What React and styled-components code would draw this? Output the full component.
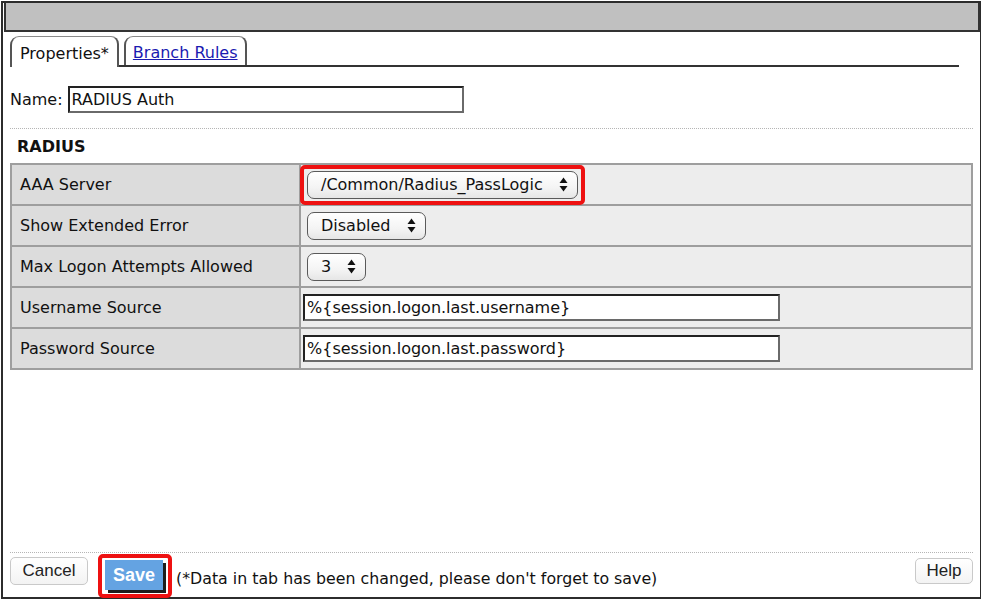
import React from "react";
import styled, { createGlobalStyle } from "styled-components";

const GlobalStyle = createGlobalStyle`
  html, body { margin: 0; padding: 0; background: #fff; }
  body { font-family: "DejaVu Sans", Verdana, sans-serif; font-size: 16px; color: #111; }
  * { box-sizing: border-box; }
`;

const Frame = styled.div`
  margin: 1px 0 0 1px;
  width: 980px;
  height: 598px;
  border: 2px solid #2c2c2c;
  border-right-width: 1px;
  display: flex;
  flex-direction: column;
`;

const TitleBar = styled.div`
  height: 29px;
  margin-left: 1px;
  background: #c0c0c0;
  border: 2px solid #333;
  border-top: none;
`;

const TabBar = styled.div`
  display: flex;
  align-items: flex-end;
  margin: 4px 21px 0 7px;
  height: 31px;
`;

const Tab = styled.div`
  height: ${(p) => (p.$active ? "31px" : "29px")};
  padding: 3px ${(p) => (p.$active ? "8px" : "7px")} 0;
  display: flex;
  align-items: center;
  background: #fff;
  border: 2px solid #555;
  border-top: 1px solid #8a8a8a;
  border-bottom: none;
  border-radius: 9px 8px 0 0;
  font-size: 16px;
  color: ${(p) => (p.$active ? "#111" : "#1a1ab0")};
  text-decoration: ${(p) => (p.$active ? "none" : "underline")};
  margin-left: ${(p) => (p.$active ? "0" : "3px")};
`;

const TabRest = styled.div`
  flex: 1;
  display: flex;
  align-items: flex-end;
  height: 31px;
  border-bottom: 2px solid #333;
  padding-left: 2px;
`;

const Content = styled.div`
  padding: 0 7px;
  display: flex;
  flex-direction: column;
  flex: 1;
`;

const NameRow = styled.div`
  display: flex;
  align-items: center;
  gap: 5px;
  margin-top: 19px;
`;

const TextInput = styled.div`
  width: ${(p) => p.$w}px;
  height: ${(p) => p.$h || 27}px;
  border: 2px solid;
  border-color: #222 #6a6a6a #6a6a6a #222;
  background: #fff;
  display: flex;
  align-items: center;
  padding-left: 2px;
  font-size: 16px;
  color: #111;
  white-space: nowrap;
`;

const Dotted = styled.div`
  border-top: 1px dotted #b5b5b5;
  margin-top: ${(p) => p.$mt || 0}px;
`;

const SectionTitle = styled.div`
  font-weight: bold;
  font-size: 16px;
  line-height: 20px;
  margin: 8px 0 0 7px;
`;

const Table = styled.table`
  border-collapse: collapse;
  width: 100%;
  margin-top: 6px;
  border: 2px solid #9e9e9e;
`;

const LabelCell = styled.td`
  width: 289px;
  height: 41px;
  padding: 0 0 0 8px;
  background: #dcdcdc;
  border: 2px solid #9e9e9e;
  font-size: 16px;
  white-space: nowrap;
`;

const ValueCell = styled.td`
  height: 41px;
  padding: 0 0 0 2px;
  background: #ededed;
  border: 2px solid #9e9e9e;
`;

const SelectBox = styled.div`
  position: relative;
  display: inline-flex;
  align-items: center;
  gap: 16px;
  height: 28px;
  margin-left: 4px;
  padding: 0 9px 0 13px;
  border: 1px solid #5a5a5a;
  border-radius: 7px;
  background: linear-gradient(#ffffff, #f4f4f4 60%, #e6e6e6);
  font-size: 16px;
  color: #111;
  vertical-align: middle;
  ${(p) =>
    p.$highlight &&
    `
    &::after {
      content: "";
      position: absolute;
      left: -8px;
      right: -8px;
      top: -7px;
      bottom: -7px;
      border: 4px solid #ee1111;
      border-radius: 5px;
    }
  `}
`;

const Arrows = () => (
  <svg width="9" height="15" viewBox="0 0 9 15">
    <path d="M4.5 0.5 L8.5 6 H0.5 Z" fill="#111" />
    <path d="M4.5 14.5 L8.5 9 H0.5 Z" fill="#111" />
  </svg>
);

const Spacer = styled.div`
  flex: 1;
`;

const Footer = styled.div`
  height: 44px;
  display: flex;
  align-items: flex-start;
  padding-top: 4px;
`;

const PlainButton = styled.div`
  width: ${(p) => p.$w}px;
  height: ${(p) => p.$h}px;
  margin-top: ${(p) => p.$mt || 0}px;
  display: flex;
  align-items: center;
  justify-content: center;
  border: 1px solid #c9c9c9;
  border-radius: 5px;
  background: linear-gradient(#ffffff, #f3f3f3);
  font-family: "Liberation Sans", Arial, sans-serif;
  font-size: 17px;
  color: #222;
`;

const SaveWrap = styled.div`
  position: relative;
  margin: 3px 0 0 17px;
  &::after {
    content: "";
    position: absolute;
    left: -7px;
    right: -9px;
    top: -6px;
    bottom: -8px;
    border: 4px solid #ee1111;
    border-radius: 5px;
  }
`;

const SaveButton = styled.div`
  width: 58px;
  height: 30px;
  display: flex;
  align-items: center;
  justify-content: center;
  background: #64a3e2;
  box-shadow: 3px 3px 0 #1e1e1e;
  font-family: "Liberation Sans", Arial, sans-serif;
  font-weight: bold;
  font-size: 18px;
  color: #fff;
`;

const Notice = styled.div`
  margin: 12px 0 0 13px;
  font-size: 15.8px;
  line-height: 20px;
  color: #111;
  white-space: nowrap;
`;

const rows = [
  { label: "AAA Server", select: "/Common/Radius_PassLogic", highlight: true },
  { label: "Show Extended Error", select: "Disabled" },
  { label: "Max Logon Attempts Allowed", select: "3" },
  { label: "Username Source", input: "%{session.logon.last.username}" },
  { label: "Password Source", input: "%{session.logon.last.password}" },
];

export default function App() {
  return (
    <>
      <GlobalStyle />
      <Frame>
        <TitleBar />
        <TabBar>
          <Tab $active>Properties*</Tab>
          <TabRest>
            <Tab>Branch Rules</Tab>
          </TabRest>
        </TabBar>
        <Content>
          <NameRow>
            <span>Name:</span>
            <TextInput $w={396} $h={27}>RADIUS Auth</TextInput>
          </NameRow>
          <Dotted $mt={15} />
          <SectionTitle>RADIUS</SectionTitle>
          <Table>
            <tbody>
              {rows.map((r) => (
                <tr key={r.label}>
                  <LabelCell>{r.label}</LabelCell>
                  <ValueCell>
                    {r.select ? (
                      <SelectBox $highlight={r.highlight}>
                        <span>{r.select}</span>
                        <Arrows />
                      </SelectBox>
                    ) : (
                      <TextInput $w={477}>{r.input}</TextInput>
                    )}
                  </ValueCell>
                </tr>
              ))}
            </tbody>
          </Table>
          <Spacer />
          <Dotted />
          <Footer>
            <PlainButton $w={78} $h={28}>Cancel</PlainButton>
            <SaveWrap>
              <SaveButton>Save</SaveButton>
            </SaveWrap>
            <Notice>(*Data in tab has been changed, please don't forget to save)</Notice>
            <Spacer />
            <PlainButton $w={58} $h={26} $mt={1}>Help</PlainButton>
          </Footer>
        </Content>
      </Frame>
    </>
  );
}
